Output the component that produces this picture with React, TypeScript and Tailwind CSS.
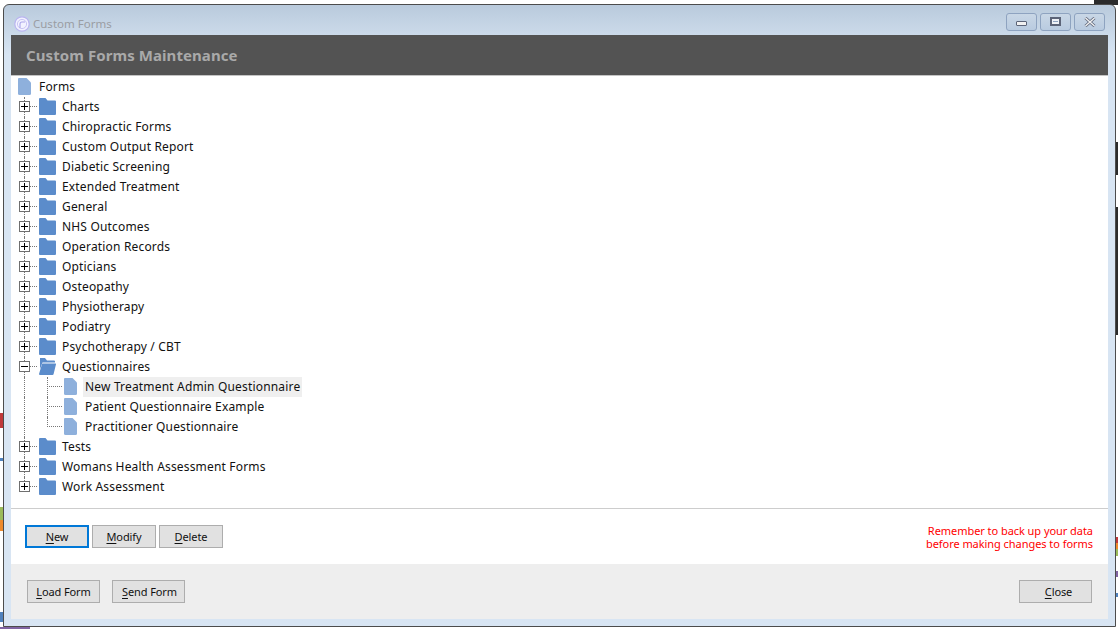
import React from "react";

const font = { fontFamily: '"Noto Sans", Tahoma, sans-serif' };

const beforeGroup = [
  "Charts",
  "Chiropractic Forms",
  "Custom Output Report",
  "Diabetic Screening",
  "Extended Treatment",
  "General",
  "NHS Outcomes",
  "Operation Records",
  "Opticians",
  "Osteopathy",
  "Physiotherapy",
  "Podiatry",
  "Psychotherapy / CBT",
];
const afterGroup = ["Tests", "Womans Health Assessment Forms", "Work Assessment"];
const children = [
  "New Treatment Admin Questionnaire",
  "Patient Questionnaire Example",
  "Practitioner Questionnaire",
];

function DocIcon() {
  return (
    <svg width="13" height="17" viewBox="0 0 13 17" className="mt-px shrink-0 self-start">
      <path d="M1 0H8.5L13 4.5V15.5A1.5 1.5 0 0 1 11.5 17H1.5A1.5 1.5 0 0 1 0 15.5V1A1 1 0 0 1 1 0Z" fill="#8eb0dc" />
    </svg>
  );
}

function FolderIcon() {
  return (
    <svg width="17" height="17" viewBox="0 0 17 17" className="mt-px shrink-0 self-start">
      <path d="M1 0H6.5L8.5 2.5H16A1 1 0 0 1 17 3.5V16A1 1 0 0 1 16 17H1A1 1 0 0 1 0 16V1A1 1 0 0 1 1 0Z" fill="#5b8ccb" />
    </svg>
  );
}

function OpenFolderIcon() {
  return (
    <svg width="17" height="17" viewBox="0 0 17 17" className="mt-px shrink-0 self-start">
      <path d="M1 0H6L8 2.5H15A1 1 0 0 1 16 3.5V4.5H3.5L1 11V0Z" fill="#5b8ccb" />
      <path d="M3.6 5.5H16.4A.6 .6 0 0 1 17 6.3L14.6 16A1.2 1.2 0 0 1 13.4 17H1A1 1 0 0 1 0 16L3 6.1A.6 .6 0 0 1 3.6 5.5Z" fill="#5b8ccb" />
    </svg>
  );
}

function Expander({ open }: { open?: boolean }) {
  return (
    <span className="absolute left-[8px] top-[4px] flex h-[11px] w-[11px] items-center justify-center border border-[#6f6f6f] bg-white">
      <span className="absolute h-px w-[7px] bg-black" />
      {!open && <span className="absolute h-[7px] w-px bg-black" />}
    </span>
  );
}

function FolderRow({ label, open, last }: { label: string; open?: boolean; last?: boolean }) {
  return (
    <div className="relative flex h-5 items-center pl-[28px]">
      <span className={`absolute left-[13px] top-0 border-l border-dotted border-[#777] ${last ? "h-[10px]" : "h-5"}`} />
      <span className="absolute left-[19px] top-[9px] w-[7px] border-t border-dotted border-[#777]" />
      <Expander open={open} />
      {open ? <OpenFolderIcon /> : <FolderIcon />}
      <span className="ml-[6px] whitespace-nowrap text-[12px] tracking-[0.17px] text-[#111]">{label}</span>
    </div>
  );
}

function ChildRow({ label, selected, last }: { label: string; selected?: boolean; last?: boolean }) {
  return (
    <div className="relative flex h-5 items-center pl-[53px]">
      <span className="absolute left-[13px] top-0 h-5 border-l border-dotted border-[#777]" />
      <span className={`absolute left-[36px] top-0 border-l border-dotted border-[#777] ${last ? "h-[10px]" : "h-5"}`} />
      <span className="absolute left-[36px] top-[9px] w-[15px] border-t border-dotted border-[#777]" />
      <DocIcon />
      <span className={`ml-[6px] flex h-5 items-center whitespace-nowrap px-[2px] text-[12px] tracking-[0.17px] text-[#111] ${selected ? "w-[219px] bg-[#efefef]" : ""}`}>
        {label}
      </span>
    </div>
  );
}

function Btn({ hot, rest, wide, focused, extra }: { hot: string; rest: string; wide?: boolean; focused?: boolean; extra?: string }) {
  return (
    <button
      className={`flex h-[23px] items-center justify-center bg-[#e1e1e1] pt-px text-[11px] tracking-[-0.1px] text-[#111] ${wide ? "w-[73px]" : "w-[64px]"} ${focused ? "border-2 border-[#0078d7]" : "border border-[#adadad]"} ${extra ?? ""}`}
    >
      <span className="underline underline-offset-2">{hot}</span>
      {rest}
    </button>
  );
}

function WinBtn({ children }: { children: React.ReactNode }) {
  return (
    <div className="flex h-[18px] w-[31px] items-center justify-center rounded-[3px] border border-[#8ea3c0] bg-gradient-to-b from-[#c9d7e6] to-[#b9cbe0]">
      {children}
    </div>
  );
}

export default function App() {
  return (
    <div className="relative h-[629px] w-[1118px] overflow-hidden bg-white pl-[3px] pt-[4px]" style={font}>
      {/* pieces of the desktop behind the window */}
      <div className="absolute right-0 top-0 h-[5px] w-[24px] bg-[#2b2b2b]" />
      <div className="absolute right-0 top-[142px] h-[33px] w-[2px] bg-[#2b2b2b]" />
      <div className="absolute right-0 top-[207px] h-[128px] w-[2px] bg-[#2b2b2b]" />
      <div className="absolute right-0 top-[537px] h-[6px] w-[2px] bg-[#c0393b]" />
      <div className="absolute right-0 top-[543px] h-[6px] w-[2px] bg-[#ee8a2d]" />
      <div className="absolute right-0 top-[549px] h-[7px] w-[2px] bg-[#9bbb59]" />
      <div className="absolute right-0 top-[571px] h-[6px] w-[2px] bg-[#8064a2]" />
      <div className="absolute right-0 top-[593px] h-[4px] w-[2px] bg-[#4f81bd]" />
      <div className="absolute left-0 top-[413px] h-[15px] w-[3px] bg-[#c0393b]" />
      <div className="absolute left-0 top-[458px] h-[3px] w-[3px] bg-[#4f81bd]" />
      <div className="absolute left-0 top-[507px] h-[13px] w-[3px] bg-[#9bbb59]" />
      <div className="absolute left-0 top-[520px] h-[11px] w-[3px] bg-[#ee8a2d]" />
      <div className="absolute left-0 top-[612px] h-[10px] w-[3px] bg-[#4f81bd]" />
      <div className="absolute bottom-0 left-0 h-[2px] w-[30px] bg-[#8064a2]" />

      <div className="relative flex h-[623px] w-[1113px] flex-col rounded-t-[6px] border border-[#4c4c4c] bg-gradient-to-b from-[#b9cadc] from-0% to-[#d8e5f3] to-[8%] px-[7px] pb-[7px]">
        <div className="flex h-[30px] shrink-0 items-center pr-[3px]">
          <svg width="16" height="16" viewBox="0 0 16 16" className="ml-[3px] mt-[7px] shrink-0">
            <circle cx="8" cy="8" r="7.2" fill="#f2f2ff" stroke="#b9b4f0" strokeWidth="1.2" />
            <circle cx="8" cy="8" r="4.6" fill="none" stroke="#c9c5f3" strokeWidth="1" />
            <path d="M6 12V8A2 2 0 0 1 8 6H11" fill="none" stroke="#a9a4ea" strokeWidth="1.1" />
          </svg>
          <span className="ml-[3px] mt-[7px] whitespace-nowrap text-[11.5px] text-[#9a9da3]">Custom Forms</span>
          <div className="ml-auto mt-[3px] flex gap-[3px]">
            <WinBtn>
              <span className="mt-[3px] h-[5px] w-[11px] rounded-[1px] border border-[#5c6478] bg-[#f1f1f1]" />
            </WinBtn>
            <WinBtn>
              <span className="flex h-[9px] w-[11px] items-center justify-center border-2 border-[#5c6478] bg-[#eef1f6]">
                <span className="h-px w-[5px] bg-[#8ea3c0]" />
              </span>
            </WinBtn>
            <WinBtn>
              <svg width="12" height="10" viewBox="0 0 12 10">
                <path d="M1.5 1 L10.5 9 M10.5 1 L1.5 9" stroke="#5c6478" strokeWidth="3" />
                <path d="M1.5 1 L10.5 9 M10.5 1 L1.5 9" stroke="#f1f1f1" strokeWidth="1.5" />
              </svg>
            </WinBtn>
          </div>
        </div>

        <div className="flex min-h-0 flex-1 flex-col bg-white">
          <div className="flex h-[41px] shrink-0 items-center border-b border-[#c4c4c4] bg-[#535353] pl-[15px] text-[15px] font-bold tracking-[0.08px] text-[#a9a9a9]">
            Custom Forms Maintenance
          </div>

          <div className="h-[433px] shrink-0 border-b border-[#cdcdcd] pt-px">
            <div className="relative flex h-5 items-center pl-[7px]">
              <DocIcon />
              <span className="ml-[8px] text-[12px] tracking-[0.17px] text-[#111]">Forms</span>
            </div>
            {beforeGroup.map((label) => (
              <FolderRow key={label} label={label} />
            ))}
            <FolderRow label="Questionnaires" open />
            {children.map((label, i) => (
              <ChildRow key={label} label={label} selected={i === 0} last={i === 2} />
            ))}
            {afterGroup.map((label, i) => (
              <FolderRow key={label} label={label} last={i === 2} />
            ))}
          </div>

          <div className="flex h-[55px] shrink-0 items-start justify-between pl-[14px] pr-[15px] pt-[15px]">
            <div className="mt-px flex gap-[3px]">
              <Btn hot="N" rest="ew" focused />
              <Btn hot="M" rest="odify" />
              <Btn hot="D" rest="elete" />
            </div>
            <p className="text-right text-[11px] leading-[13px] tracking-[-0.05px] text-[#ff0000]">
              Remember to back up your data
              <br />
              before making changes to forms
            </p>
          </div>

          <div className="flex flex-1 items-start bg-[#eeeeee] px-[16px] pt-[16px]">
            <div className="flex gap-[12px]">
              <Btn hot="L" rest="oad Form" wide />
              <Btn hot="S" rest="end Form" wide extra="pl-[2px]" />
            </div>
            <div className="ml-auto">
              <Btn hot="C" rest="lose" wide extra="pl-[6px]" />
            </div>
          </div>
        </div>
      </div>
    </div>
  );
}
